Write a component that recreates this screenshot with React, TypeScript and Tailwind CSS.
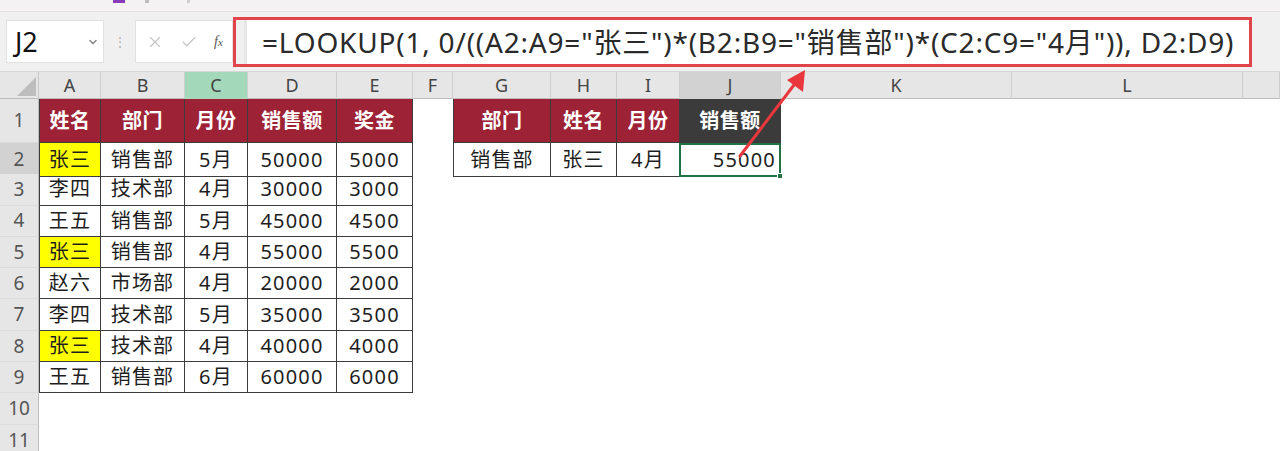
import { X, Check, ChevronDown } from 'lucide-react';

const COLS = 'grid grid-cols-[39px_62px_84px_63px_89px_76px_40px_98px_66px_63px_101px_231px_231px_1fr]';
const LETTERS = ['A', 'B', 'C', 'D', 'E', 'F', 'G', 'H', 'I', 'J', 'K', 'L', ''];

interface Row {
  name: string;
  dept: string;
  month: string;
  sales: string;
  bonus: string;
  mark?: boolean;
}

const rows: Row[] = [
  { name: '张三', dept: '销售部', month: '5月', sales: '50000', bonus: '5000', mark: true },
  { name: '李四', dept: '技术部', month: '4月', sales: '30000', bonus: '3000' },
  { name: '王五', dept: '销售部', month: '5月', sales: '45000', bonus: '4500' },
  { name: '张三', dept: '销售部', month: '4月', sales: '55000', bonus: '5500', mark: true },
  { name: '赵六', dept: '市场部', month: '4月', sales: '20000', bonus: '2000' },
  { name: '李四', dept: '技术部', month: '5月', sales: '35000', bonus: '3500' },
  { name: '张三', dept: '技术部', month: '4月', sales: '40000', bonus: '4000', mark: true },
  { name: '王五', dept: '销售部', month: '6月', sales: '60000', bonus: '6000' },
];

const font = 'font-["Noto_Sans","Noto_Sans_CJK_SC",sans-serif]';
const cell = 'flex items-center justify-center border-r border-b border-[#3c3c3c] text-[20px] tracking-[1.2px] text-[#1e1e1e]';
const headBase = 'flex items-center justify-center border-r border-b border-[#3c3c3c] text-[20px] tracking-[0.5px] font-bold text-white';
const head = `${headBase} bg-[#9e2236]`;

function RowNum({ n, active }: { n: number; active?: boolean }) {
  return (
    <div
      className={`flex items-center justify-center border-r border-b border-r-[#bdbdbd] border-b-[#dcdcdc] text-[19px] text-[#555] ${
        active ? 'bg-[#d2d2d2]' : 'bg-[#e6e6e6]'
      }`}
    >
      {n}
    </div>
  );
}

export default function App() {
  return (
    <div className={`relative w-[1280px] h-[451px] overflow-hidden bg-white ${font}`}>
      {/* 顶部条 */}
      <div className="h-[12px] bg-[#f4f2f2] border-b border-[#e2e2e2] flex items-start">
        <div className="ml-[113px] w-[12px] h-[3px] bg-[#8a3ab9]" />
        <div className="ml-[20px] w-[4px] h-[3px] bg-[#bdbdbd]" />
        <div className="ml-[38px] w-[3px] h-[3px] bg-[#cfcfcf]" />
      </div>

      {/* 编辑栏 */}
      <div className="h-[60px] bg-[#f0f0f0] flex items-center pl-[6px] border-b border-[#d6d6d6]">
        <div className="w-[98px] h-[43px] bg-white border border-[#e1e1e1] flex items-center justify-between pl-[8px] pr-[4px]">
          <span className="text-[27px] text-[#111] leading-none">J2</span>
          <ChevronDown size={12} strokeWidth={3} className="text-[#888]" />
        </div>
        <div className="w-[31px] flex justify-center text-[#b5b5b5] text-[14px] leading-none">⋮</div>
        <div className="w-[98px] h-[43px] bg-white border border-[#e1e1e1] flex items-center pl-[10px] gap-[16px]">
          <X size={18} strokeWidth={1.5} className="text-[#c3c3c3]" />
          <Check size={18} strokeWidth={1.5} className="text-[#c3c3c3]" />
          <span className='font-["Liberation_Serif",serif] italic text-[14px] text-[#555]'>
            f<span className="text-[11px]">x</span>
          </span>
        </div>
        <div className="w-[1019px] h-[50px] border-[3px] border-[#e1444a] flex items-stretch">
          <div className="flex-1 bg-white border-l-[3px] border-[#e6e6e6] ml-[8px] flex items-center pl-[15px]">
            <span className="text-[28px] text-[#2a2a2a] whitespace-nowrap leading-none tracking-[0.8px]">
              =LOOKUP(1, 0/((A2:A9="张三")*(B2:B9="销售部")*(C2:C9="4月")), D2:D9)
            </span>
          </div>
        </div>
      </div>

      {/* 列标题 */}
      <div className={`${COLS} h-[27px] bg-[#e6e6e6] border-b border-[#bcbcbc] text-[18px] text-[#444]`}>
        <div className="relative border-r border-[#c8c8c8]">
          <svg width="39" height="27" className="absolute inset-0">
            <polygon points="36,5 36,24 17,24" fill="#bdbdbd" />
          </svg>
        </div>
        {LETTERS.map((l, i) => (
          <div
            key={i}
            className={`flex items-center justify-center border-r border-[#cdcdcd] ${
              l === 'C' ? 'bg-[#a3d8ba]' : l === 'J' ? 'bg-[#d2d2d2]' : ''
            }`}
          >
            {l}
          </div>
        ))}
      </div>

      {/* 第1行：表头 */}
      <div className={`${COLS} h-[44px]`}>
        <RowNum n={1} />
        <div className={`${head} border-l`}>姓名</div>
        <div className={head}>部门</div>
        <div className={head}>月份</div>
        <div className={head}>销售额</div>
        <div className={head}>奖金</div>
        <div />
        <div className={`${head} border-l`}>部门</div>
        <div className={head}>姓名</div>
        <div className={head}>月份</div>
        <div className={`${headBase} bg-[#3b3b3b]`}>销售额</div>
        <div />
        <div />
        <div />
      </div>

      {/* 数据行 */}
      {rows.map((r, i) => (
        <div key={i} className={`${COLS} h-[31.3px]`}>
          <RowNum n={i + 2} active={i === 0} />
          <div className={`${cell} border-l ${r.mark ? 'bg-[#ffff00]' : ''}`}>{r.name}</div>
          <div className={cell}>{r.dept}</div>
          <div className={cell}>{r.month}</div>
          <div className={cell}>{r.sales}</div>
          <div className={cell}>{r.bonus}</div>
          <div />
          {i === 0 ? (
            <>
              <div className={`${cell} border-l`}>销售部</div>
              <div className={cell}>张三</div>
              <div className={cell}>4月</div>
              <div className="relative flex items-center justify-end pr-[3px] border-2 border-[#217346] -ml-[1px] text-[20px] tracking-[1.2px] text-[#1e1e1e]">
                55000
                <div className="absolute -right-[4px] -bottom-[4px] w-[6px] h-[6px] bg-[#217346] border border-white" />
              </div>
            </>
          ) : (
            <>
              <div />
              <div />
              <div />
              <div />
            </>
          )}
          <div />
          <div />
          <div />
        </div>
      ))}

      {[10, 11].map((n) => (
        <div key={n} className={`${COLS} h-[31.3px]`}>
          <RowNum n={n} />
        </div>
      ))}

      {/* 红色箭头 */}
      <svg className="absolute inset-0 pointer-events-none" width="1280" height="451">
        <line x1="740" y1="156" x2="797" y2="81" stroke="#e8383d" strokeWidth="3" strokeLinecap="round" />
        <polygon points="805,70 803,92 787,80" fill="#e8383d" />
      </svg>
    </div>
  );
}
